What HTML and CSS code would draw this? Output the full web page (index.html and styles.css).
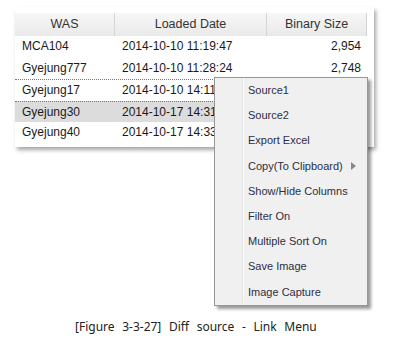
FILE: index.html
```html
<!DOCTYPE html>
<html lang="en">
<head>
    <meta charset="UTF-8">
    <title>Diff source - Link Menu</title>
    <link rel="stylesheet" href="styles.css">
</head>
<body>
    <div class="figure">
        <div class="grid-panel">
            <div class="grid-head">
                <div class="col col-was">WAS</div>
                <div class="col col-date">Loaded Date</div>
                <div class="col col-size">Binary Size</div>
            </div>
            <div class="grid-row">
                <div class="col col-was">MCA104</div>
                <div class="col col-date">2014-10-10 11:19:47</div>
                <div class="col col-size">2,954</div>
            </div>
            <div class="grid-row">
                <div class="col col-was">Gyejung777</div>
                <div class="col col-date">2014-10-10 11:28:24</div>
                <div class="col col-size">2,748</div>
            </div>
            <div class="grid-row">
                <div class="col col-was">Gyejung17</div>
                <div class="col col-date">2014-10-10 14:11:02</div>
                <div class="col col-size">3,102</div>
            </div>
            <div class="grid-row selected">
                <div class="col col-was">Gyejung30</div>
                <div class="col col-date">2014-10-17 14:31:15</div>
                <div class="col col-size">3,120</div>
            </div>
            <div class="grid-row">
                <div class="col col-was">Gyejung40</div>
                <div class="col col-date">2014-10-17 14:33:40</div>
                <div class="col col-size">3,120</div>
            </div>
        </div>

        <div class="context-menu">
            <div class="menu-item">Source1</div>
            <div class="menu-item">Source2</div>
            <div class="menu-item">Export Excel</div>
            <div class="menu-item has-sub">Copy(To Clipboard)<span class="sub-arrow"></span></div>
            <div class="menu-item">Show/Hide Columns</div>
            <div class="menu-item">Filter On</div>
            <div class="menu-item">Multiple Sort On</div>
            <div class="menu-item">Save Image</div>
            <div class="menu-item">Image Capture</div>
        </div>
    </div>

    <p class="caption">[Figure 3-3-27] Diff source - Link Menu</p>
</body>
</html>
```

FILE: styles.css
```css
body {
    margin: 0;
    background: #fff;
    font-family: "Liberation Sans", Arial, sans-serif;
    color: #222;
}
.figure {
    position: relative;
    height: 306px;
    padding: 7px 0 0 15px;
    box-sizing: border-box;
}
.grid-panel {
    width: 359px;
    padding-top: 6px;
    padding-bottom: 3px;
    background: #fff;
    box-shadow: 2px 3px 4px rgba(0, 0, 0, 0.35);
    font-size: 12px;
}
.grid-head, .grid-row {
    display: flex;
    width: 352px;
}
.grid-head {
    height: 23px;
    line-height: 23px;
    background: linear-gradient(to bottom, #f7f7f7, #e9e9e9);
    color: #333;
    font-size: 12.5px;
}
.grid-head .col {
    text-align: center;
    border-right: 1px solid #d4d4d4;
}
.grid-row {
    height: 21.5px;
    line-height: 21.5px;
    color: #1a1a1a;
}
.grid-row:nth-child(4), .grid-row:nth-child(5) {
    border-top: 1px dotted #777;
    height: 20.5px;
}
.grid-row.selected {
    background: #dcdcdc;
}
.col {
    box-sizing: border-box;
    white-space: nowrap;
    overflow: hidden;
}
.col-was {
    width: 100px;
    padding-left: 7px;
}
.col-date {
    width: 152px;
    padding-left: 7px;
}
.col-size {
    width: 100px;
    text-align: right;
    padding-right: 6px;
}
.grid-head .col-was, .grid-head .col-date {
    padding-left: 0;
}
.grid-head .col-size {
    padding-right: 0;
}

.context-menu {
    position: absolute;
    left: 214px;
    top: 77px;
    width: 152px;
    height: 227px;
    background: linear-gradient(to right, #f0f0f0 27px, #e2e2e2 27px, #e2e2e2 28px, #fff 28px, #fff 29px, #f0f0f0 29px);
    border: 1px solid #979797;
    box-shadow: 3px 3px 3px rgba(0, 0, 0, 0.4);
    font-size: 11px;
    color: #2e2e44;
}
.menu-item {
    position: relative;
    height: 25.2px;
    line-height: 25.2px;
    padding-left: 33px;
}
.sub-arrow {
    position: absolute;
    left: 136px;
    top: 8px;
    width: 0;
    height: 0;
    border-top: 4px solid transparent;
    border-bottom: 4px solid transparent;
    border-left: 5px solid #888;
}
.caption {
    margin: 12px 0 0 75px;
    font-family: "Noto Sans", sans-serif;
    font-size: 12px;
    word-spacing: 4.5px;
    color: #222;
}
```
